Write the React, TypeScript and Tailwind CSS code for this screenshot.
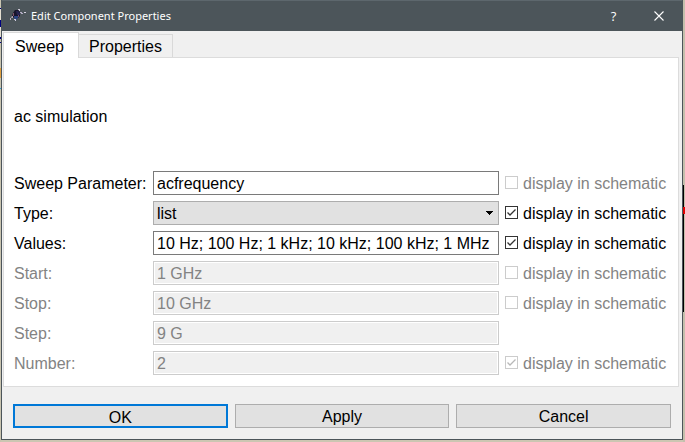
import React, { useState } from "react";

type Row = {
  id: string;
  label: string;
  value: string;
  enabled: boolean;
  kind: "text" | "select";
  display?: { checked: boolean; enabled: boolean };
};

const rows: Row[] = [
  { id: "param", label: "Sweep Parameter:", value: "acfrequency", enabled: true, kind: "text", display: { checked: false, enabled: false } },
  { id: "type", label: "Type:", value: "list", enabled: true, kind: "select", display: { checked: true, enabled: true } },
  { id: "values", label: "Values:", value: "10 Hz; 100 Hz; 1 kHz; 10 kHz; 100 kHz; 1 MHz", enabled: true, kind: "text", display: { checked: true, enabled: true } },
  { id: "start", label: "Start:", value: "1 GHz", enabled: false, kind: "text", display: { checked: false, enabled: false } },
  { id: "stop", label: "Stop:", value: "10 GHz", enabled: false, kind: "text", display: { checked: false, enabled: false } },
  { id: "step", label: "Step:", value: "9 G", enabled: false, kind: "text" },
  { id: "number", label: "Number:", value: "2", enabled: false, kind: "text", display: { checked: true, enabled: false } },
];

function AppIcon() {
  return (
    <svg width="16" height="16" viewBox="0 0 16 16" aria-hidden="true">
      <path d="M3 5 L5 2 H8 L10 4 V8 L8 10 H4 L2 8 Z" fill="#17142a" />
      <path d="M6 3 H8 L10 5 V7 H7 Z" fill="#262350" />
      <path d="M4 8 H8 V10 L6 12 L4 10 Z" fill="#2a4382" />
      <path d="M2 8 H3 V10 H1 V12 H0 V10 H1 Z" fill="#b3a8b4" />
      <path d="M8 1 H10 V3 H9 V2 H8 Z" fill="#cac5d4" />
      <path d="M10 4 H12 V5 H13 V6 H11 V5 H10 Z" fill="#b3adc4" />
      <path d="M14 4 H16 V5 H14 Z" fill="#d5d1e0" />
      <path d="M4 11 H6 V13 H5 V12 H4 Z" fill="#d0cde0" />
      <rect x="3" y="5" width="1" height="3" fill="#80536a" />
      <rect x="8" y="7" width="1" height="2" fill="#6f466a" />
    </svg>
  );
}

function TitleBar() {
  return (
    <header className="flex h-[31px] items-center border-t border-[#5d676d] bg-[#4c555a] pl-2 text-white">
      <AppIcon />
      <h1 className="ml-[5px] flex-1 font-['Noto_Sans','Open_Sans',sans-serif] text-[11px] leading-4">
        Edit Component Properties
      </h1>
      <button type="button" aria-label="Help" className="flex h-full w-[45px] items-center justify-center font-['Open_Sans',sans-serif] text-[13px] leading-4">
        ?
      </button>
      <button type="button" aria-label="Close" className="flex h-full w-[46px] items-center justify-center">
        <svg width="10" height="10" viewBox="0 0 10 10" aria-hidden="true">
          <path d="M0.5 0.5 L9.5 9.5 M9.5 0.5 L0.5 9.5" stroke="#fff" strokeWidth="1.1" fill="none" />
        </svg>
      </button>
    </header>
  );
}

function Field({ row }: { row: Row }) {
  if (row.kind === "select") {
    return (
      <div className="relative">
        <select id={row.id} defaultValue={row.value} className="block h-6 w-full appearance-none border border-[#adadad] bg-[#e1e1e1] px-[3px] pt-[2px] leading-5 outline-none">
          <option value="list">list</option>
          <option value="linear">linear</option>
          <option value="logarithmic">logarithmic</option>
        </select>
        <svg className="pointer-events-none absolute right-[6px] top-[10px]" width="7" height="4" viewBox="0 0 7 4" shapeRendering="crispEdges" aria-hidden="true">
          <path d="M0 0 H7 V1 H6 V2 H5 V3 H4 V4 H3 V3 H2 V2 H1 V1 H0 Z" fill="#000" />
        </svg>
      </div>
    );
  }
  return (
    <input
      id={row.id}
      type="text"
      defaultValue={row.value}
      disabled={!row.enabled}
      className="block h-6 w-full min-w-0 border border-[#7a7a7a] bg-white px-[3px] pt-[2px] leading-5 outline-none disabled:border-[#cccccc] disabled:bg-[#f0f0f0] disabled:text-[#838383] disabled:inset-ring disabled:inset-ring-white"
    />
  );
}

function DisplayToggle({ checked, enabled }: { checked: boolean; enabled: boolean }) {
  const [on, setOn] = useState(checked);
  return (
    <label className={enabled ? "flex items-center gap-[5px]" : "flex items-center gap-[5px] text-[#838383]"}>
      <span className="relative mb-px size-[13px] shrink-0">
        <input
          type="checkbox"
          checked={on}
          disabled={!enabled}
          onChange={(e) => setOn(e.target.checked)}
          className="block size-[13px] appearance-none border border-[#333333] bg-white disabled:border-[#cccccc]"
        />
        {on && (
          <svg className="pointer-events-none absolute inset-0" width="13" height="13" viewBox="0 0 13 13" aria-hidden="true">
            <path d="M2.5 6.5 L5 9 L10.5 3.5" fill="none" strokeWidth="1.3" stroke={enabled ? "#333333" : "#b8b8b8"} />
          </svg>
        )}
      </span>
      <span className="whitespace-nowrap pt-[2px]">display in schematic</span>
    </label>
  );
}

function LeftDesktop() {
  return (
    <div className="flex w-px shrink-0 flex-col bg-[#c9c4b0]">
      <div className="h-2" />
      <div className="h-px bg-[#000080]" />
      <div className="h-[11px] bg-[#e4dfd0]" />
      <div className="h-[7px] bg-[#000080]" />
      <div className="h-[10px] bg-[#e4dfd0]" />
      <div className="h-[2px] bg-[#000080]" />
      <div className="h-[3px]" />
      <div className="h-px bg-[#000080]" />
      <div className="h-[25px]" />
      <div className="h-[10px] bg-[#e0a040]" />
      <div className="h-[10px]" />
      <div className="h-px bg-[#30a0e0]" />
    </div>
  );
}

function RightDesktop() {
  return (
    <div className="flex w-[2px] shrink-0 flex-col bg-[#c4bfac]">
      <div className="h-[185px]" />
      <div className="mr-px h-[22px] bg-black" />
      <div className="h-[7px] bg-[#e00000]" />
      <div className="mr-px h-[98px] bg-black" />
    </div>
  );
}

export default function App() {
  return (
    <div className="flex min-h-screen w-full bg-[#cbc6b2] font-['Liberation_Sans',Arial,sans-serif] text-[16px] leading-5 text-black">
      <LeftDesktop />
      <main className="mb-[2px] flex min-w-0 flex-1 flex-col border-x border-b border-[#4c555a] bg-[#f0f0f0]">
        <TitleBar />
        <div className="flex flex-1 flex-col pl-px pr-[3px] pt-px">
          <div role="tablist" className="flex items-end">
            <button type="button" role="tab" aria-selected="true" className="z-10 -mb-px h-[26px] w-[76px] border border-b-0 border-[#d9d9d9] bg-white pr-[3px] pt-[2px]">
              Sweep
            </button>
            <button type="button" role="tab" aria-selected="false" className="h-[23px] w-[94px] border border-b-0 border-l-0 border-[#d9d9d9] bg-[#f0f0f0] pt-[2px]">
              Properties
            </button>
          </div>
          <section role="tabpanel" className="flex-1 border border-[#dcdcdc] bg-white px-[10px] pb-[11px] pt-[49px]">
            <p className="mb-[44px]">ac simulation</p>
            <form className="grid grid-cols-[133px_minmax(0,1fr)_163px] items-center gap-x-[6px] gap-y-[6px]">
              {rows.map((row) => (
                <React.Fragment key={row.id}>
                  <label htmlFor={row.id} className={row.enabled ? "whitespace-nowrap pt-[2px]" : "whitespace-nowrap pt-[2px] text-[#838383]"}>
                    {row.label}
                  </label>
                  <Field row={row} />
                  {row.display ? <DisplayToggle {...row.display} /> : <span />}
                </React.Fragment>
              ))}
            </form>
          </section>
          <footer className="grid grid-cols-3 gap-[7px] pb-[11px] pl-[10px] pr-[8px] pt-[17px]">
            <button type="button" className="h-6 border-2 border-[#0078d7] bg-[#e1e1e1] pt-[2px]">OK</button>
            <button type="button" className="h-6 border border-[#adadad] bg-[#e1e1e1] pt-[2px]">Apply</button>
            <button type="button" className="h-6 border border-[#adadad] bg-[#e1e1e1] pt-[2px]">Cancel</button>
          </footer>
        </div>
      </main>
      <RightDesktop />
    </div>
  );
}
